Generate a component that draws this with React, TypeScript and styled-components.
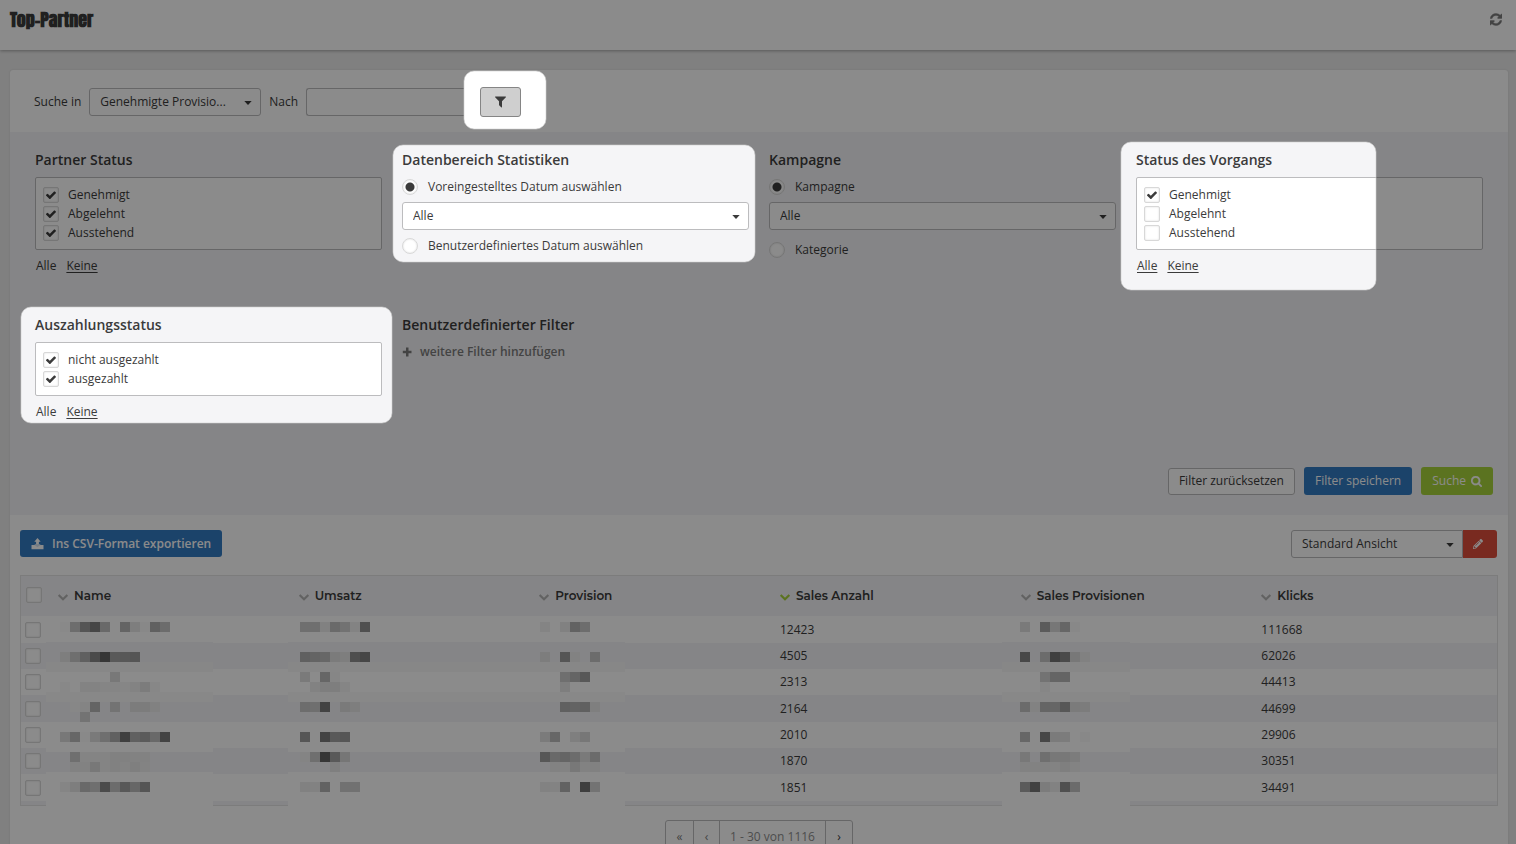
import React, { useLayoutEffect, useRef, useState } from "react";
import styled, { createGlobalStyle } from "styled-components";
import { FaPencilAlt } from "react-icons/fa";

const color = {
  page: "#ebebeb",
  white: "#ffffff",
  tint: "#f5f5f7",
  text: "#3b3b3b",
  muted: "#7c7c7c",
  border: "#bcbcbe",
  soft: "#d8d8d8",
  blue: "#337bc2",
  green: "#a8d33b",
  red: "#de4e3b",
};

const GlobalStyle = createGlobalStyle`
  * { box-sizing: border-box; }
  body {
    margin: 0;
    background: ${color.page};
    color: ${color.text};
    font: 12px/20px "Open Sans", "Noto Sans", sans-serif;
  }
  button, input, select { font: inherit; color: inherit; margin: 0; }
`;

const Page = styled.div`
  position: relative;
  height: 100vh;
  overflow: hidden;
`;

const Header = styled.header`
  display: flex;
  justify-content: space-between;
  align-items: flex-start;
  height: 50px;
  padding: 10px 13px 0 10px;
  background: ${color.white};
  box-shadow: 0 1px 3px rgba(0, 0, 0, 0.3);
`;

const Title = styled.h1`
  margin: 0;
  font: bold 18px/20px Anton, "Liberation Sans Narrow", "Liberation Sans", sans-serif;
`;

const IconButton = styled.button`
  display: flex;
  padding: 3px 1px;
  border: 0;
  background: none;
  color: ${color.muted};
`;

const Card = styled.main`
  margin: 20px 8px 0 10px;
  min-height: 100%;
  border-radius: 3px;
  background: ${color.white};
  box-shadow: 0 0 2px rgba(0, 0, 0, 0.12);
`;

const SearchBar = styled.form`
  display: flex;
  align-items: center;
  gap: 8px;
  height: 62px;
  padding: 2px 24px 0;
`;

const SelectBox = styled.span<{ $width?: string; $joined?: boolean }>`
  position: relative;
  display: block;
  width: ${(p) => p.$width ?? "100%"};

  select {
    display: block;
    width: 100%;
    height: 28px;
    padding: 0 28px 0 10px;
    appearance: none;
    border: 1px solid ${color.border};
    border-radius: ${(p) => (p.$joined ? "3px 0 0 3px" : "3px")};
    background: ${color.white};
    text-overflow: ellipsis;
  }

  svg {
    position: absolute;
    right: 9px;
    top: 12px;
    pointer-events: none;
  }
`;

const SearchInput = styled.input`
  width: 158px;
  height: 28px;
  padding: 0 10px;
  border: 1px solid ${color.border};
  border-right: 0;
  border-radius: 3px 0 0 3px;
  background: ${color.white};
`;

const FilterToggle = styled.button`
  display: flex;
  align-items: center;
  justify-content: center;
  width: 41px;
  height: 30px;
  margin-left: 8px;
  border: 1px solid #858585;
  border-radius: 3px;
  background: #cfcfcf;
`;

const Filters = styled.section`
  padding: 18px 15px 20px 25px;
  background: ${color.tint};
`;

const FilterGrid = styled.div`
  display: grid;
  grid-template-columns: repeat(4, 1fr);
  grid-template-rows: 165px 152px;
  column-gap: 20px;
  padding-right: 10px;
`;

const Group = styled.fieldset`
  min-width: 0;
  margin: 0;
  padding: 0;
  border: 0;
`;

const Legend = styled.legend`
  margin-bottom: 8px;
  padding: 0;
  font-size: 14px;
  line-height: 19px;
  font-weight: 600;
`;

const CheckList = styled.div`
  padding: 7px;
  border: 1px solid ${color.border};
  border-radius: 2px;
  background: ${color.white};
`;

const Option = styled.label<{ $height?: number; $top?: number }>`
  display: flex;
  align-items: center;
  gap: ${(p) => (p.$height ? 9 : 10)}px;
  height: ${(p) => p.$height ?? 20}px;
  margin-top: ${(p) => p.$top ?? 0}px;
`;

const Box = styled.span`
  position: relative;
  display: block;
  width: 16px;
  height: 16px;

  svg {
    position: absolute;
    left: 3px;
    top: 3px;
    pointer-events: none;
  }
`;

const Tick = styled.input`
  display: block;
  width: 16px;
  height: 16px;
  appearance: none;
  border: 1px solid ${color.soft};
  border-radius: 2px;
  background: ${color.white};
  box-shadow: inset 0 0 2px rgba(0, 0, 0, 0.15);
`;

const Radio = styled.input`
  width: 16px;
  height: 16px;
  appearance: none;
  border: 1px solid ${color.soft};
  border-radius: 50%;
  background: ${color.white};
  box-shadow: inset 0 0 2px rgba(0, 0, 0, 0.15);

  &:checked {
    background: radial-gradient(circle, ${color.text} 4px, ${color.white} 5px);
  }
`;

const RadioSelect = styled.div`
  margin-top: 5px;
`;

const Links = styled.div`
  display: flex;
  gap: 10px;
  margin-top: 6px;
  padding-left: 1px;
`;

const QuickLink = styled.a<{ $plain?: boolean }>`
  color: inherit;
  text-decoration: ${(p) => (p.$plain ? "none" : "underline")};
  text-underline-offset: 2px;
`;

const AddFilter = styled.button`
  display: flex;
  align-items: center;
  gap: 8px;
  padding: 0;
  border: 0;
  background: none;
  color: ${color.muted};
  font-weight: 600;
`;

const Actions = styled.div`
  display: flex;
  justify-content: flex-end;
  align-items: flex-end;
  gap: 9px;
`;

const Button = styled.button<{ $fill?: string; $gap?: number; $strong?: boolean }>`
  display: flex;
  align-items: center;
  gap: ${(p) => p.$gap ?? 5}px;
  height: ${(p) => (p.$fill && !p.$strong ? 28 : 27)}px;
  padding: ${(p) => (p.$fill ? "0 11px" : "0 10px 1px")};
  border: ${(p) => (p.$fill ? "0" : `1px solid ${color.border}`)};
  border-radius: 3px;
  background: ${(p) => p.$fill ?? color.white};
  color: ${(p) => (p.$fill ? color.white : color.text)};
  font-weight: ${(p) => (p.$strong ? 600 : 400)};
`;

const Results = styled.section`
  padding: 15px 10px 0;
`;

const Toolbar = styled.div`
  display: flex;
  justify-content: space-between;
  align-items: flex-start;
  margin-bottom: 17px;
`;

const ViewPicker = styled.div`
  display: flex;
  padding-right: 1px;
`;

const EditButton = styled.button`
  display: flex;
  align-items: center;
  width: 34px;
  padding: 0 10px;
  border: 0;
  border-radius: 0 3px 3px 0;
  background: ${color.red};
  color: ${color.white};
`;

const TableFrame = styled.div`
  padding-bottom: 4px;
  border: 1px solid #e4e4e4;
  background: ${color.tint};
`;

const Table = styled.table`
  width: 100%;
  table-layout: fixed;
  border-collapse: collapse;

  th, td { padding: 0 0 0 5px; text-align: left; }
  th:first-child { padding-bottom: 2px; }
  tr > :first-child { width: 32px; }
  td:first-child { padding-left: 4px; }
  thead tr { height: 40px; }
  tbody tr { height: 26px; background: ${color.white}; }
  tbody tr:nth-child(3n + 1) { height: 27px; }
  tbody tr:nth-child(even) { background: ${color.tint}; }
  td { position: relative; }
`;

const SortButton = styled.button<{ $active?: boolean }>`
  display: flex;
  align-items: center;
  gap: 6px;
  padding: 0;
  border: 0;
  background: none;
  font: 600 12px/20px Montserrat, Inter, sans-serif;

  svg {
    margin-top: 2px;
    color: ${(p) => (p.$active ? color.green : "#b4b4b4")};
  }
`;

const Patch = styled.svg<{ $left: number }>`
  position: absolute;
  z-index: 1;
  top: 0;
  left: ${(p) => p.$left}px;
`;

const Pager = styled.nav`
  display: flex;
  width: max-content;
  height: 32px;
  margin: 14px auto 0;
  border: 1px solid ${color.border};
  border-radius: 3px;
  color: #8e8e8e;
`;

const PagerButton = styled.button<{ $wide?: boolean }>`
  width: ${(p) => (p.$wide ? 28 : 26)}px;
  padding: 1px 0 0;
  border: 0;
  border-right: 1px solid ${color.border};
  background: none;
  color: ${color.muted};

  &:last-child { border-right: 0; color: ${color.text}; }
`;

const PagerText = styled.span`
  padding: 6px 10px 4px;
  border-right: 1px solid ${color.border};
`;

const Shade = styled.svg`
  position: absolute;
  z-index: 5;
  inset: 0;
  width: 100%;
  height: 100%;
  pointer-events: none;
`;

const Caret = () => (
  <svg width="8" height="6" viewBox="0 0 8 6" aria-hidden="true">
    <path d="M0.3 1h7.400L4 5z" fill={color.text} />
  </svg>
);

const CheckIcon = () => (
  <svg width="10" height="10" viewBox="120 260 1552 1262" aria-hidden="true">
    <path
      fill={color.text}
      d="M1671 566q0 40-28 68l-724 724-136 136q-28 28-68 28t-68-28l-136-136-362-362q-28-28-28-68t28-68l136-136q28-28 68-28t68 28l294 295 656-657q28-28 68-28t68 28l136 136q28 28 28 68z"
    />
  </svg>
);

const RefreshIcon = () => (
  <svg width="12" height="13" viewBox="0 0 1536 1536" aria-hidden="true">
    <path
      fill="currentColor"
      stroke="currentColor"
      strokeWidth="50"
      d="M1511 928q0 5-1 7-64 268-268 434.500t-478 166.500q-146 0-282.500-55t-243.500-157l-129 129q-19 19-45 19t-45-19-19-45v-448q0-26 19-45t45-19h448q26 0 45 19t19 45-19 45l-137 137q71 66 161 102t187 36q134 0 250-65t186-179q11-17 53-117 8-23 30-23h192q13 0 22.500 9.500t9.500 22.500zM1536 128v448q0 26-19 45t-45 19h-448q-26 0-45-19t-19-45 19-45l138-138q-148-137-349-137-134 0-250 65t-186 179q-11 17-53 117-8 23-30 23h-199q-13 0-22.500-9.500t-9.500-22.500v-7q65-268 270-434.500t480-166.500q146 0 284 55.500t245 156.500l130-129q19-19 45-19t45 19 19 45z"
    />
  </svg>
);

const FilterIcon = () => (
  <svg width="11" height="12" viewBox="0 0 1408 1408" aria-hidden="true">
    <path
      fill={color.text}
      d="M1403 39q17 41-14 70l-493 493v742q0 42-39 59-13 5-25 5-27 0-45-19l-256-256q-19-19-19-45v-486l-493-493q-31-29-14-70 17-39 59-39h1280q42 0 59 39z"
    />
  </svg>
);

const SearchIcon = () => (
  <svg width="11" height="11" viewBox="0 0 1664 1664" aria-hidden="true">
    <path
      fill="currentColor"
      stroke="currentColor"
      strokeWidth="40"
      d="M1152 704q0-185-131.500-316.500t-316.500-131.500-316.500 131.500-131.500 316.500 131.500 316.500 316.500 131.500 316.500-131.500 131.500-316.500zm512 832q0 52-38 90t-90 38q-54 0-90-38l-343-342q-179 124-399 124-143 0-273.500-55.500t-225-150-150-225-55.500-273.500 55.500-273.500 150-225 225-150 273.500-55.500 273.500 55.500 225 150 150 225 55.500 273.500q0 220-124 399l343 343q37 37 37 90z"
    />
  </svg>
);

const ChevronIcon = () => (
  <svg width="10" height="7" viewBox="90 533 1612 1036" aria-hidden="true">
    <path
      fill="currentColor"
      d="M1683 808l-742 741q-19 19-45 19t-45-19l-742-741q-19-19-19-45.500t19-45.500l166-165q19-19 45-19t45 19l531 531 531-531q19-19 45-19t45 19l166 165q19 19 19 45.500t-19 45.500z"
    />
  </svg>
);

const PlusIcon = () => (
  <svg width="10" height="10" viewBox="0 0 10 10" aria-hidden="true">
    <path fill="currentColor" d="M4 0.500h2.500v3.200H9.500v2.500H6.500v3.200H4V6.200H0.800V3.700H4z" />
  </svg>
);

const ExportIcon = () => (
  <svg width="13" height="12" viewBox="0 0 12 12" aria-hidden="true">
    <path fill="currentColor" d="M6 0l3.200 3.700H7.400V6.500H4.600V3.700H2.800z" />
    <path fill="currentColor" d="M0 7h3.200a3 2 0 0 0 5.600 0H12v4.200H0z" />
    <path fill="currentColor" opacity="0.8" d="M3.200 6.200h5.600v2H3.200z" />
  </svg>
);

function Select({ label, value, width, joined }: { label: string; value: string; width?: string; joined?: boolean }) {
  return (
    <SelectBox $width={width} $joined={joined}>
      <select aria-label={label} defaultValue={value}>
        <option>{value}</option>
      </select>
      <Caret />
    </SelectBox>
  );
}

function Checkbox({ label, initial = false }: { label?: string; initial?: boolean }) {
  const [on, setOn] = useState(initial);
  return (
    <Box>
      <Tick type="checkbox" aria-label={label} checked={on} onChange={() => setOn(!on)} />
      {on && <CheckIcon />}
    </Box>
  );
}

function StatusGroup({
  title,
  options,
  allLinked,
  groupRef,
}: {
  title: string;
  options: [string, boolean][];
  allLinked?: boolean;
  groupRef?: React.Ref<HTMLFieldSetElement>;
}) {
  return (
    <Group ref={groupRef}>
      <Legend>{title}</Legend>
      <CheckList>
        {options.map(([name, on]) => (
          <Option key={name} $height={19}>
            <Checkbox initial={on} />
            {name}
          </Option>
        ))}
      </CheckList>
      <Links>
        <QuickLink href="#alle" $plain={!allLinked}>Alle</QuickLink>
        <QuickLink href="#keine">Keine</QuickLink>
      </Links>
    </Group>
  );
}

/* Redacted cells: each entry is [y, x, grey levels of consecutive 10px squares]; "--" leaves a gap. */
type Run = [number, number, string];

const nameRuns: Run[] = [
  [6, 14, "fb c8 9c 80 c0 -- b8 e8 fa b0 c6"],
  [36, 14, "e8 cc b0 88 64 a4 a2 9c"],
  [56, 64, "dc"],
  [66, 14, "fa -- f0 f0 f4 f4 f6 f0 e4 f8"],
  [86, 24, "f8 f2 b8 -- d4 -- e4 e4 ec"],
  [96, 34, "d4"],
  [116, 14, "dc be fb e0 cc b0 74 b0 a8 c0 7c"],
  [136, 24, "cc f2 f2 f2 ec ec ee ee"],
  [146, 24, "ee ee dc f2 ec f0 ea f0"],
  [166, 14, "f4 e8 c0 cc 8a c6 a2 be 9c"],
];

const salesRuns: Run[] = [
  [6, 12, "cc cc ec c2 d2 f0 94"],
  [36, 12, "b0 b8 be e2 e8 90 80"],
  [56, 12, "e0 -- bc f6"],
  [66, 22, "ee e8 e8 f4"],
  [86, 12, "c8 cc 7c -- e0 e8"],
  [116, 12, "9e -- 7c a4 9e"],
  [136, 12, "f2 cc 64 a4 d8"],
  [146, 42, "ea"],
  [166, 12, "ec ee b4 -- d0 d0"],
  [6, 252, "f2 -- ec b4 c8"],
  [36, 252, "e6 -- 9c ee -- c6"],
  [56, 272, "cc ba a2"],
  [66, 272, "e8"],
  [86, 272, "b0 b6 b0 ea"],
  [116, 252, "e2 be -- ea da"],
  [136, 252, "a0 c0 ba c6 e0 c4"],
  [146, 262, "ee f0 dc ee ec"],
  [166, 252, "ee f0 b4 -- 72 d4"],
];

const provisionRuns: Run[] = [
  [6, 18, "e0 -- a8 da bc fa"],
  [36, 18, "84 -- c6 74 88 dc ec"],
  [56, 38, "d4 ba b8"],
  [66, 38, "f6"],
  [86, 18, "c4 ee ba bc a0 e2 e4"],
  [116, 18, "be -- 82 e2 e4 -- fa"],
  [136, 18, "dc -- cc dc dc e4"],
  [146, 18, "ee ee ee f0 ea f0"],
  [166, 18, "a8 78 e4 ee 94 c4"],
];

const stripes: [number, number, string][] = [
  [26, 20, color.tint],
  [46, 10, "#f7f7f8"],
  [76, 10, "#f9f9f9"],
  [86, 20, color.tint],
  [136, 20, color.tint],
];

function Mosaic({ left, width, runs }: { left: number; width: number; runs: Run[] }) {
  return (
    <Patch $left={left} width={width} height="192" shapeRendering="crispEdges" aria-hidden="true">
      <rect width={width} height="192" fill={color.white} />
      {stripes.map(([y, h, fill]) => (
        <rect key={y} y={y} width={width} height={h} fill={fill} />
      ))}
      {runs.map(([y, x, levels]) =>
        levels.split(" ").map((v, i) =>
          v === "--" ? null : (
            <rect key={`${x}-${y}-${i}`} x={x + i * 10} y={y} width="10" height="10" fill={`#${v}${v}${v}`} />
          )
        )
      )}
    </Patch>
  );
}

const columns = ["Name", "Umsatz", "Provision", "Sales Anzahl", "Sales Provisionen", "Klicks"];
const rows = [
  ["12423", "111668"],
  ["4505", "62026"],
  ["2313", "44413"],
  ["2164", "44699"],
  ["2010", "29906"],
  ["1870", "30351"],
  ["1851", "34491"],
];

type Rect = { x: number; y: number; width: number; height: number };

/* Space left free around each highlighted element: left, top, extra width, extra height. */
const spotMargins = {
  toggle: [16, 16, 41, 28],
  range: [9, 5, 15, 11],
  status: [15, 8, -92, 22],
  payout: [14, 8, 24, 9],
};

export default function App() {
  const page = useRef<HTMLDivElement>(null);
  const toggle = useRef<HTMLButtonElement>(null);
  const range = useRef<HTMLFieldSetElement>(null);
  const status = useRef<HTMLFieldSetElement>(null);
  const payout = useRef<HTMLFieldSetElement>(null);
  const [spots, setSpots] = useState<Rect[]>([]);

  useLayoutEffect(() => {
    const measure = () => {
      const origin = page.current!.getBoundingClientRect();
      const refs = { toggle, range, status, payout };
      setSpots(
        (Object.keys(refs) as (keyof typeof refs)[]).map((key) => {
          const el = refs[key].current!;
          const box = el.getBoundingClientRect();
          const last = el.lastElementChild!.getBoundingClientRect();
          const height = key === "toggle" ? box.height : last.bottom - box.top;
          const [l, t, w, h] = spotMargins[key];
          return {
            x: Math.round(box.left - origin.left - l),
            y: Math.round(box.top - origin.top - t),
            width: Math.round(box.width + w),
            height: Math.round(height + h),
          };
        })
      );
    };
    measure();
    window.addEventListener("resize", measure);
    return () => window.removeEventListener("resize", measure);
  }, []);

  return (
    <Page ref={page}>
      <GlobalStyle />
      <Header>
        <Title>Top-Partner</Title>
        <IconButton aria-label="Aktualisieren"><RefreshIcon /></IconButton>
      </Header>
      <Card>
        <SearchBar onSubmit={(e) => e.preventDefault()}>
          <span>Suche in</span>
          <Select label="Suche in" value="Genehmigte Provisio..." width="172px" />
          <label htmlFor="term">Nach</label>
          <SearchInput id="term" />
          <FilterToggle ref={toggle} type="button" aria-label="Filter"><FilterIcon /></FilterToggle>
        </SearchBar>

        <Filters>
          <FilterGrid>
            <StatusGroup
              title="Partner Status"
              options={[["Genehmigt", true], ["Abgelehnt", true], ["Ausstehend", true]]}
            />
            <Group ref={range}>
              <Legend>Datenbereich Statistiken</Legend>
              <Option><Radio type="radio" name="range" defaultChecked />Voreingestelltes Datum auswählen</Option>
              <RadioSelect><Select label="Datum" value="Alle" /></RadioSelect>
              <Option $top={6}><Radio type="radio" name="range" />Benutzerdefiniertes Datum auswählen</Option>
            </Group>
            <Group>
              <Legend>Kampagne</Legend>
              <Option><Radio type="radio" name="campaign" defaultChecked />Kampagne</Option>
              <RadioSelect><Select label="Kampagne" value="Alle" /></RadioSelect>
              <Option $top={10}><Radio type="radio" name="campaign" />Kategorie</Option>
            </Group>
            <StatusGroup
              groupRef={status}
              title="Status des Vorgangs"
              options={[["Genehmigt", true], ["Abgelehnt", false], ["Ausstehend", false]]}
              allLinked
            />
            <StatusGroup
              groupRef={payout}
              title="Auszahlungsstatus"
              options={[["nicht ausgezahlt", true], ["ausgezahlt", true]]}
            />
            <Group>
              <Legend>Benutzerdefinierter Filter</Legend>
              <AddFilter type="button"><PlusIcon />weitere Filter hinzufügen</AddFilter>
            </Group>
          </FilterGrid>
          <Actions>
            <Button type="button">Filter zurücksetzen</Button>
            <Button type="button" $fill={color.blue}>Filter speichern</Button>
            <Button type="button" $fill={color.green}>Suche <SearchIcon /></Button>
          </Actions>
        </Filters>

        <Results>
          <Toolbar>
            <Button type="button" $fill={color.blue} $gap={8} $strong><ExportIcon />Ins CSV-Format exportieren</Button>
            <ViewPicker>
              <Select label="Ansicht" value="Standard Ansicht" width="172px" joined />
              <EditButton type="button" aria-label="Ansicht bearbeiten"><FaPencilAlt size={10} /></EditButton>
            </ViewPicker>
          </Toolbar>
          <TableFrame>
            <Table>
              <thead>
                <tr>
                  <th><Checkbox label="Alle auswählen" /></th>
                  {columns.map((name) => (
                    <th key={name}>
                      <SortButton type="button" $active={name === "Sales Anzahl"}>
                        <ChevronIcon />{name}
                      </SortButton>
                    </th>
                  ))}
                </tr>
              </thead>
              <tbody>
                {rows.map(([sales, clicks], i) => (
                  <tr key={sales}>
                    <td><Checkbox label="Zeile auswählen" /></td>
                    <td>{i === 0 && <Mosaic left={-7} width={167} runs={nameRuns} />}</td>
                    <td>{i === 0 && <Mosaic left={-6} width={337} runs={salesRuns} />}</td>
                    <td />
                    <td>{sales}</td>
                    <td>{i === 0 && <Mosaic left={-14} width={128} runs={provisionRuns} />}</td>
                    <td>{clicks}</td>
                  </tr>
                ))}
              </tbody>
            </Table>
          </TableFrame>
          <Pager aria-label="Seiten">
            <PagerButton $wide>«</PagerButton>
            <PagerButton>‹</PagerButton>
            <PagerText>1 - 30 von 1116</PagerText>
            <PagerButton>›</PagerButton>
          </Pager>
        </Results>
      </Card>

      <Shade aria-hidden="true">
        <mask id="spots">
          <rect width="100%" height="100%" fill="#fff" />
          {spots.map((s, i) => <rect key={i} {...s} rx="10" fill="#000" />)}
        </mask>
        <rect width="100%" height="100%" fill="#000" fillOpacity="0.455" mask="url(#spots)" />
        {spots.map((s, i) => (
          <rect key={i} {...s} rx="10" fill="none" stroke="#d0d0d0" strokeOpacity="0.6" />
        ))}
      </Shade>
    </Page>
  );
}
